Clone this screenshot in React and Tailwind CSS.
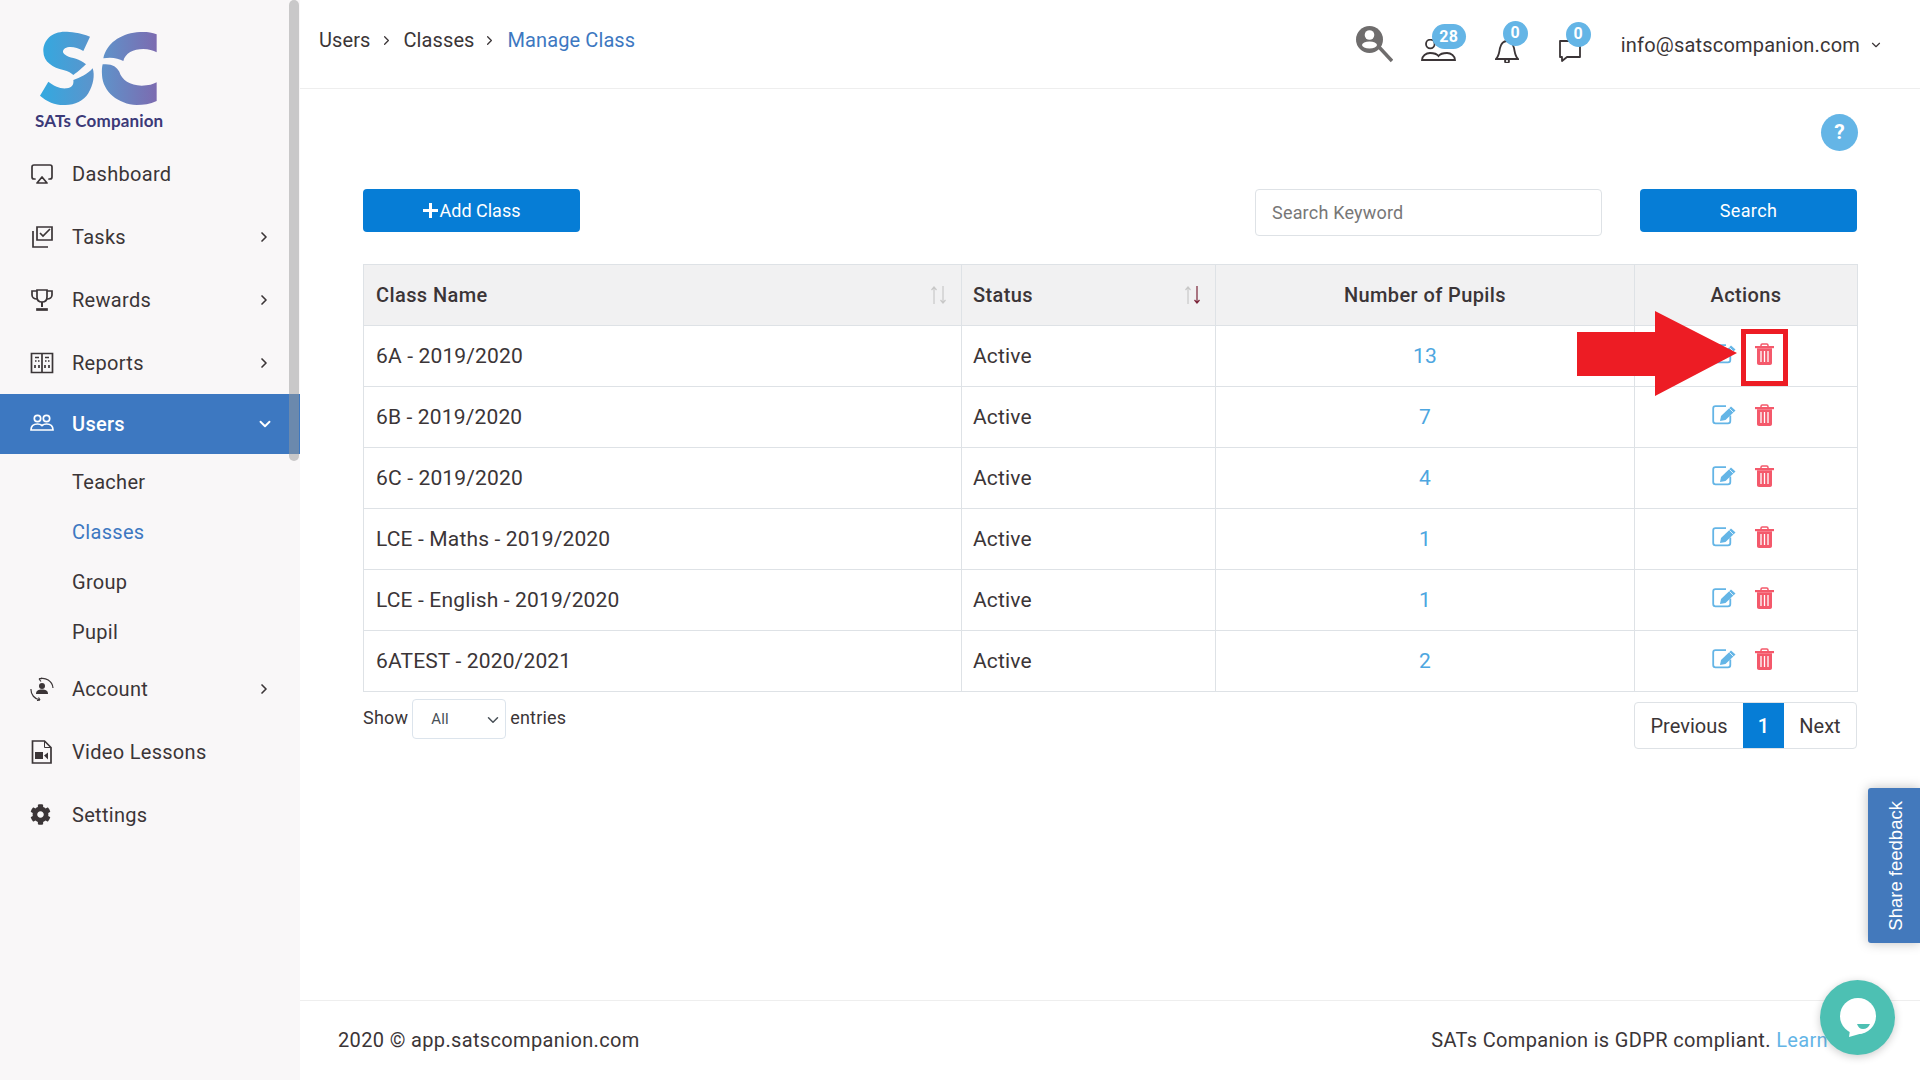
import React from "react";
import { FaCog } from "react-icons/fa";
import { ChevronRight, ChevronDown, Airplay } from "lucide-react";

function Logo() {
  return (
    <div className="flex flex-col items-start pl-[30px] pt-[25px] h-[142px]">
      <svg width="140" height="84" viewBox="0 0 420 252">
        <defs>
          <linearGradient id="gs" gradientUnits="userSpaceOnUse" x1="30" x2="195" y1="0" y2="0"><stop offset="0" stopColor="#33a9e0" /><stop offset="1" stopColor="#5d93cb" /></linearGradient>
          <linearGradient id="gc" gradientUnits="userSpaceOnUse" x1="215" x2="380" y1="0" y2="0"><stop offset="0" stopColor="#5f93ca" /><stop offset="1" stopColor="#7c6bb0" /></linearGradient>
        </defs>
        <path d="M180 35C150 22 120 20 105 20C65 20 40 45 40 78C40 112 70 128 100 135C115 139 125 145 130 150C145 140 160 125 168 118C150 100 125 100 110 92C98 86 95 78 105 70C118 62 140 66 160 78Z" fill="url(#gs)" />
        <path d="M188 130C195 150 190 180 175 205C160 230 130 242 100 240C75 240 50 230 30 212L55 170C70 182 90 192 110 190C125 188 132 180 130 165C150 158 172 148 188 130Z" fill="url(#gs)" />
        <path d="M380 28C360 20 340 20 320 22C270 28 230 55 220 100C245 95 265 100 280 108C285 85 310 72 340 72C355 72 370 76 380 82Z" fill="url(#gc)" />
        <path d="M218 118C245 115 260 125 268 140C275 165 300 180 335 182C355 182 370 178 380 172L380 228C360 238 340 240 320 240C265 238 218 200 216 150C215 135 216 125 218 118Z" fill="url(#gc)" />
      </svg>
      <div className="ml-[5px] mt-[3px] font-[Lato,sans-serif] font-bold text-[17px] tracking-[0.15px] leading-[18px] text-[#3c3a78] whitespace-nowrap">SATs Companion</div>
    </div>
  );
}

const ic = { width: 24, height: 24, viewBox: "0 0 24 24", fill: "none", stroke: "#3b3537", strokeWidth: 1.7 };

const TasksI = () => (
  <svg {...ic}><path d="M7 2h15v13H7z" /><path d="M10 8l3 3 7-7" /><path d="M3 6v16h15" /></svg>
);
const TrophyI = () => (
  <svg {...ic}><path d="M7 2h10v7c0 3-2 5-5 5s-5-2-5-5z" /><path d="M7 3H2v4c0 2 2 4 5 4M17 3h5v4c0 2-2 4-5 4" /><path d="M12 14v5" strokeWidth="2" /><path d="M7 21h10v1H7z" fill="#3b3537" /></svg>
);
const ReportsI = () => (
  <svg {...ic}><path d="M1.5 2.5h21v19h-21zM12 2.5v19" /><path d="M5 6.5h4M15 6.5h4M5 10h1.5M8 10h1.5M15 10h1.5M18 10h1.5M5 14v3M9 14v3M15 14v3M19 14v3" /></svg>
);
const UsersI = ({ c = "#fff" }) => (
  <svg {...ic} stroke={c}><circle cx="7.5" cy="6.5" r="3.2" /><circle cx="16.5" cy="6.5" r="3.2" /><path d="M1 18c0-4 2.5-6 6.5-6 2 0 3.5.6 4.5 1.5 1-.9 2.5-1.5 4.5-1.5 4 0 6.5 2 6.5 6z" /></svg>
);
const AccountI = () => (
  <svg {...ic}><circle cx="12" cy="9" r="3" fill="#3b3537" stroke="none" /><path d="M6 17c0-3.500 2.500-4.500 6-4.500s6 1 6 4.500z" fill="#3b3537" stroke="none" /><path d="M9 2A10.500 10.500 0 0 1 23 11M1 12A10.500 10.500 0 0 0 10 23" strokeWidth="1.200" /><path d="M9 2l3-1M9 2l2 2.500M10 23l-3 .5M10 23l-1.500-2.500" strokeWidth="1.200" /></svg>
);
const VideoI = () => (
  <svg {...ic}><path d="M2.500 1h12l6.500 6.500V23H2.500z" /><path d="M14.500 1v6.500H21" strokeWidth="1" /><rect x="5" y="12" width="8" height="7" fill="#3b3537" stroke="none" /><path d="M14 15.500l4-3v7z" fill="#3b3537" stroke="none" /></svg>
);

function NavItem({ icon, label, arrow }) {
  return (
    <div className="flex items-center h-[63px] pl-[31px] pr-[28px] text-[#3b3537]">
      <span className="w-[41px] flex items-center -ml-[1px] mr-[1px]">{icon}</span>
      <span className="flex-1">{label}</span>
      {arrow && <ChevronRight size={16} strokeWidth={2.5} className="mt-[1px]" />}
    </div>
  );
}

function Sidebar() {
  return (
    <aside className="w-[300px] shrink-0 bg-[#f9f7f8] flex flex-col tracking-[0.3px]">
      <Logo />
      <NavItem icon={<Airplay size={24} strokeWidth={1.7} />} label="Dashboard" />
      <NavItem icon={<TasksI />} label="Tasks" arrow />
      <NavItem icon={<TrophyI />} label="Rewards" arrow />
      <NavItem icon={<ReportsI />} label="Reports" arrow />
      <div className="flex items-center h-[60px] pl-[30px] pr-[26px] bg-[#3d78c1] text-white font-medium">
        <span className="w-[41px] mr-[1px] flex items-center"><UsersI /></span>
        <span className="flex-1">Users</span>
        <ChevronDown size={18} strokeWidth={2.5} />
      </div>
      <div className="flex flex-col pl-[72px] pt-[3px] text-[#3b3537]">
        <div className="h-[50px] flex items-center">Teacher</div>
        <div className="h-[50px] flex items-center text-[#3d78c1]">Classes</div>
        <div className="h-[50px] flex items-center">Group</div>
        <div className="h-[50px] flex items-center">Pupil</div>
      </div>
      <NavItem icon={<AccountI />} label="Account" arrow />
      <NavItem icon={<VideoI />} label="Video Lessons" />
      <NavItem icon={<FaCog size={21} />} label="Settings" />
    </aside>
  );
}

function Badge({ children, className }) {
  return <span className={"absolute flex items-center justify-center h-[25px] rounded-full bg-[#64b5e6] text-white text-[16px] font-bold " + className}>{children}</span>;
}

function Header() {
  return (
    <header className="h-[89px] shrink-0 border-b border-[#eeeeee] flex items-center pl-[19px] pr-[37px] text-[#3b3537] tracking-[0.2px]">
      <nav className="flex items-center -mt-[8px] tracking-[0.1px]">
        <span>Users</span><ChevronRight size={15} className="ml-[8px] mr-[10px]" />
        <span>Classes</span><ChevronRight size={15} className="ml-[7px] mr-[11px]" />
        <span className="text-[#3d78c1]">Manage Class</span>
      </nav>
      <div className="ml-auto flex items-center">
        <svg width="37" height="37" viewBox="0 0 37 37" className="mr-[28px]">
          <circle cx="13.500" cy="13.500" r="13.500" fill="#6f6d6d" />
          <circle cx="13.500" cy="9" r="4.800" fill="#fff" />
          <ellipse cx="13.500" cy="19" rx="7.500" ry="3.500" fill="#fff" />
          <path d="M23 21l13 14" stroke="#6f6d6d" strokeWidth="3.500" />
        </svg>
        <div className="relative w-[35px] h-[22px] mt-[12px] mr-[39px]">
          <svg width="35" height="22" viewBox="0 0 35 22" fill="none" stroke="#3b3537" strokeWidth="1.800"><circle cx="9.300" cy="5" r="4.300" /><path d="M1 21C1 17 5 14 9 14C13 14 16 15 17.500 17C19 15 22 14 26 14C30 14 34 17 34 21Z" /></svg>
          <Badge className="w-[34px] -top-[15px] left-[11px]">28</Badge>
        </div>
        <div className="relative w-[24px] h-[23px] mt-[12px] mr-[39px]">
          <svg width="24" height="24" viewBox="0 0 24 24" fill="none" stroke="#3b3537" strokeWidth="1.800"><path d="M1 20c3-3 3-6 4-11 1-4 3-7 7-7s6 3 7 7c1 5 1 8 4 11z" /><circle cx="12" cy="22" r="2" /></svg>
          <Badge className="w-[25px] -top-[18px] left-[8px]">0</Badge>
        </div>
        <div className="relative w-[23px] h-[23px] mt-[12px] mr-[40px]">
          <svg width="24" height="24" viewBox="0 0 24 24" fill="none" stroke="#3b3537" strokeWidth="1.800"><path d="M2 2h20v16H9l-5 4v-4H2z" strokeLinejoin="round" /></svg>
          <Badge className="w-[25px] -top-[17px] left-[8px]">0</Badge>
        </div>
        <span className="mt-[2px]">info@satscompanion.com</span>
        <ChevronDown size={14} strokeWidth={2} className="ml-[9px] mt-[2px]" />
      </div>
    </header>
  );
}

const EditI = () => (
  <svg width="25" height="20" viewBox="0 0 25 20">
    <path d="M14 1.200H3.500C2 1.200 1.200 2 1.200 3.500V16C1.200 17.500 2 18.300 3.500 18.300H16C17.500 18.300 18.300 17.500 18.300 16V10.500" fill="none" stroke="#64b5e6" strokeWidth="1.800" />
    <path d="M8 16L9 11L19 1.500L23.500 5.500L13.500 15Z" fill="#64b5e6" />
    <path d="M17.500 3.500L21.500 7.500" stroke="#fff" strokeWidth="0.800" />
  </svg>
);

const TrashI = () => (
  <svg width="19" height="22" viewBox="0 0 19 22">
    <path d="M6 3V2.200C6 1.500 6.500 1 7.200 1h4.600c.7 0 1.200.5 1.200 1.200V3" fill="none" stroke="#f4596b" strokeWidth="1.500" />
    <rect x="0" y="3" width="19" height="2.200" fill="#f4596b" />
    <path d="M2 5.200h15V20c0 1.200-.8 2-2 2H4c-1.200 0-2-.8-2-2z" fill="#f4596b" />
    <path d="M6 8v11M9.500 8v11M13 8v11" stroke="#fff" strokeWidth="1.300" />
  </svg>
);

const SortI = ({ active }) => (
  <svg width="20" height="20" viewBox="0 0 20 20" fill="none" strokeWidth="1.200">
    <path d="M5 19V2M2.500 5L5 2l2.500 3" stroke="#c8c8c8" />
    <path d="M14 1v17M11.500 15l2.500 3 2.500-3" stroke={active ? "#7a2338" : "#c8c8c8"} />
  </svg>
);

const rows = [
  ["6A - 2019/2020", "13"],
  ["6B - 2019/2020", "7"],
  ["6C - 2019/2020", "4"],
  ["LCE - Maths - 2019/2020", "1"],
  ["LCE - English - 2019/2020", "1"],
  ["6ATEST - 2020/2021", "2"],
];

function ClassTable() {
  return (
    <table className="w-[1494px] table-fixed border-collapse border border-[#dee2e6] text-[#3b3537]">
      <colgroup>
        <col className="w-[598px]" /><col className="w-[254px]" /><col className="w-[419px]" /><col className="w-[223px]" />
      </colgroup>
      <thead>
        <tr className="h-[61px] bg-[#f1f1f2] tracking-[0.4px]">
          <th className="font-medium border border-[#dee2e6] px-[12px] text-left">
            <div className="flex items-center justify-between">Class Name<SortI /></div>
          </th>
          <th className="font-medium border border-[#dee2e6] pl-[11px] pr-[12px] text-left">
            <div className="flex items-center justify-between">Status<SortI active /></div>
          </th>
          <th className="font-medium border border-[#dee2e6] text-center">Number of Pupils</th>
          <th className="font-medium border border-[#dee2e6] text-center">Actions</th>
        </tr>
      </thead>
      <tbody className="text-[21px] tracking-[0.15px]">
        {rows.map(([name, n]) => (
          <tr key={name} className="h-[61px]">
            <td className="border border-[#dee2e6] px-[12px] pt-[2px]">{name}</td>
            <td className="border border-[#dee2e6] pl-[11px] pr-[12px] pt-[2px]">Active</td>
            <td className="border border-[#dee2e6] pt-[2px] text-center text-[#4da6e0]">{n}</td>
            <td className="border border-[#dee2e6]">
              <div className="flex items-center pl-[77px] gap-[18px] -mt-[5px]">
                <EditI />
                <TrashI />
              </div>
            </td>
          </tr>
        ))}
      </tbody>
    </table>
  );
}

function Content() {
  return (
    <main className="flex-1 relative pl-[63px] pr-[63px] pt-[25px]">
      <div className="flex justify-end">
        <span className="w-[37px] h-[37px] mr-[-1px] rounded-full bg-[#64b5e6] text-white font-bold text-[21px] flex items-center justify-center">?</span>
      </div>
      <div className="flex items-start mt-[38px]">
        <button className="w-[217px] h-[43px] rounded-[4px] bg-[#067dd6] text-white text-[18px] flex items-center justify-center">
          <svg width="15" height="15" viewBox="0 0 15 15" className="mr-[2px]"><path d="M6 0h3v6h6v3H9v6H6V9H0V6h6z" fill="#fff" /></svg>
          Add Class
        </button>
        <input readOnly placeholder="Search Keyword" className="ml-auto w-[347px] h-[47px] rounded-[4px] border border-[#dee2e6] px-[16px] text-[18px] tracking-[0.2px] placeholder:text-[#777]" />
        <button className="w-[217px] h-[43px] ml-[38px] rounded-[4px] bg-[#067dd6] text-white text-[18px] tracking-[0.4px]">Search</button>
      </div>
      <div className="mt-[28px]"><ClassTable /></div>
      <div className="flex items-start justify-between mt-[7px]">
        <div className="flex items-center text-[18px] tracking-[0.2px] text-[#3b3537] h-[40px]">
          <span className="-mt-[3px]">Show</span>
          <div className="relative mx-[4px] w-[94px] h-[40px] border border-[#dce4ec] rounded-[4px] flex items-center pl-[18px] text-[15px] text-[#495057]">
            All
            <ChevronDown size={18} className="absolute right-[3px] top-[11px]" />
          </div>
          <span className="-mt-[3px]">entries</span>
        </div>
        <div className="mt-[3px] flex h-[47px] border border-[#dee2e6] rounded-[4px] text-[#3b3537] items-stretch">
          <span className="w-[108px] flex items-center justify-center">Previous</span>
          <span className="w-[41px] flex items-center justify-center bg-[#067dd6] text-white font-medium">1</span>
          <span className="flex-1 w-[72px] flex items-center justify-center">Next</span>
        </div>
      </div>
    </main>
  );
}

function Footer() {
  return (
    <footer className="h-[80px] shrink-0 border-t border-[#eeeeee] flex items-center pl-[38px] pb-[1px] text-[#3b3537] tracking-[0.35px]">
      <span>2020 © app.satscompanion.com</span>
      <span className="ml-auto pr-[92px]">SATs Companion is GDPR compliant. <span className="text-[#64b5e6]">Learn</span></span>
    </footer>
  );
}

export default function App() {
  return (
    <div className="relative flex w-[1920px] h-[1080px] overflow-hidden bg-white font-[Roboto,sans-serif] text-[20px]">
      <Sidebar />
      <div className="flex-1 flex flex-col min-w-0">
        <Header />
        <Content />
        <Footer />
      </div>

      {/* sidebar scrollbar */}
      <div className="absolute left-[289px] top-0 w-[10px] h-[461px] rounded-[5px] bg-[#99999980]" />

      {/* annotation */}
      <svg width="161" height="85" viewBox="0 0 161 85" className="absolute left-[1577px] top-[311px]">
        <path d="M0 21h78V0l82 42-82 43V65H0z" fill="#ed1c24" />
      </svg>
      <div className="absolute left-[1741px] top-[329px] w-[47px] h-[57px] border-[5px] border-[#ed1c24]" />

      {/* feedback tab */}
      <div className="absolute left-[1868px] top-[788px] w-[52px] h-[155px] pl-[3px] rounded-l-[3px] bg-[#4379bc] shadow-[0_0_12px_rgba(0,0,0,0.25)] flex items-center justify-center">
        <span className="-rotate-90 whitespace-nowrap text-white text-[18.500px] font-[Liberation_Sans,sans-serif]">Share feedback</span>
      </div>

      {/* chat bubble */}
      <div className="absolute left-[1820px] top-[980px] w-[75px] h-[75px] rounded-full bg-[#4dc0b3] shadow-[0_2px_8px_rgba(0,0,0,0.2)] flex items-center justify-center">
        <svg width="38" height="40" viewBox="0 0 38 40">
          <circle cx="19" cy="18" r="18" fill="#fff" />
          <path d="M11 32l-1 7 14-4z" fill="#fff" />
          <path d="M18 26h13c-1 3-4 5-7 5s-5-2-6-5z" fill="#4dc0b3" />
        </svg>
      </div>
    </div>
  );
}
